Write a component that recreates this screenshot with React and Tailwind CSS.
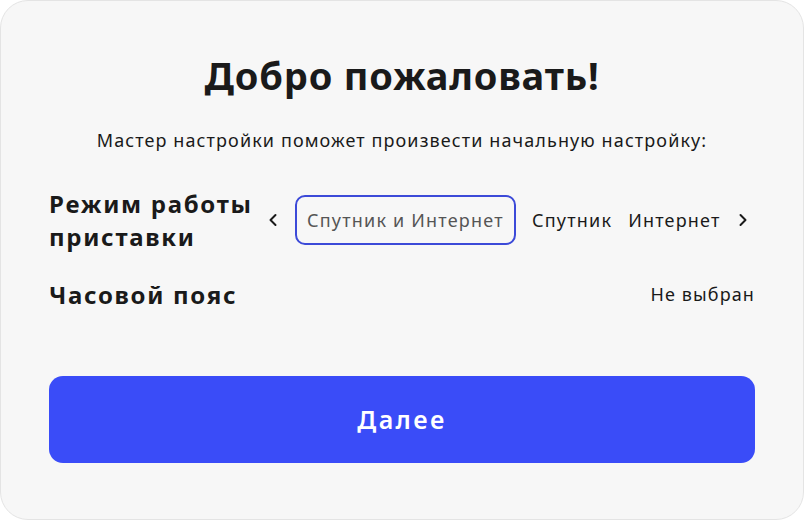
import { ChevronLeft, ChevronRight } from 'lucide-react';

const modes = ['Спутник и Интернет', 'Спутник', 'Интернет'];

export default function App() {
  const selected = 0;

  return (
    <div className="w-[804px] h-[520px] bg-white" style={{ fontFamily: '"Noto Sans", "Open Sans", sans-serif' }}>
      <div className="w-full h-full bg-[#f7f7f7] border border-[#e4e4e4] rounded-[28px] px-12 pt-[48px] flex flex-col">
        {/* Header */}
        <h1 className="text-center text-[38px] leading-[52px] font-bold tracking-[0.8px] text-[#1a1a1a]">Добро пожаловать!</h1>
        <p className="text-center text-[18px] leading-6 tracking-[1.1px] text-[#1a1a1a] mt-[27px]">
          Мастер настройки поможет произвести начальную настройку:
        </p>

        {/* Mode row */}
        <div className="flex items-center mt-[35px]">
          <div className="w-[214px] text-[24px] leading-[33px] font-bold tracking-[1.7px] text-[#1a1a1a]">Режим работы приставки</div>
          <ChevronLeft size={20} strokeWidth={2.4} className="text-[#1a1a1a]" />
          <div className="flex items-center gap-4 ml-[12px]">
            {modes.map((m, i) => (
              <div
                key={m}
                className={
                  i === selected
                    ? 'h-[50px] w-[221px] px-[10px] flex items-center rounded-[10px] border-2 border-[#3c4ad8] text-[18px] tracking-[1.2px] text-[#555555] whitespace-nowrap'
                    : 'text-[18px] tracking-[1.2px] text-[#1a1a1a] whitespace-nowrap'
                }
              >
                {m}
              </div>
            ))}
          </div>
          <ChevronRight size={20} strokeWidth={2.4} className="text-[#1a1a1a] ml-[12px]" />
        </div>

        {/* Timezone row */}
        <div className="flex items-center justify-between mt-[25px]">
          <div className="text-[24px] leading-[33px] font-bold tracking-[1.7px] text-[#1a1a1a]">Часовой пояс</div>
          <div className="text-[18px] tracking-[1.1px] text-[#1a1a1a]">Не выбран</div>
        </div>

        <button className="mt-[65px] h-[87px] w-full rounded-[14px] bg-[#3a4cf8] text-white text-[25px] font-semibold tracking-[2.4px]">
          Далее
        </button>
      </div>
    </div>
  );
}
